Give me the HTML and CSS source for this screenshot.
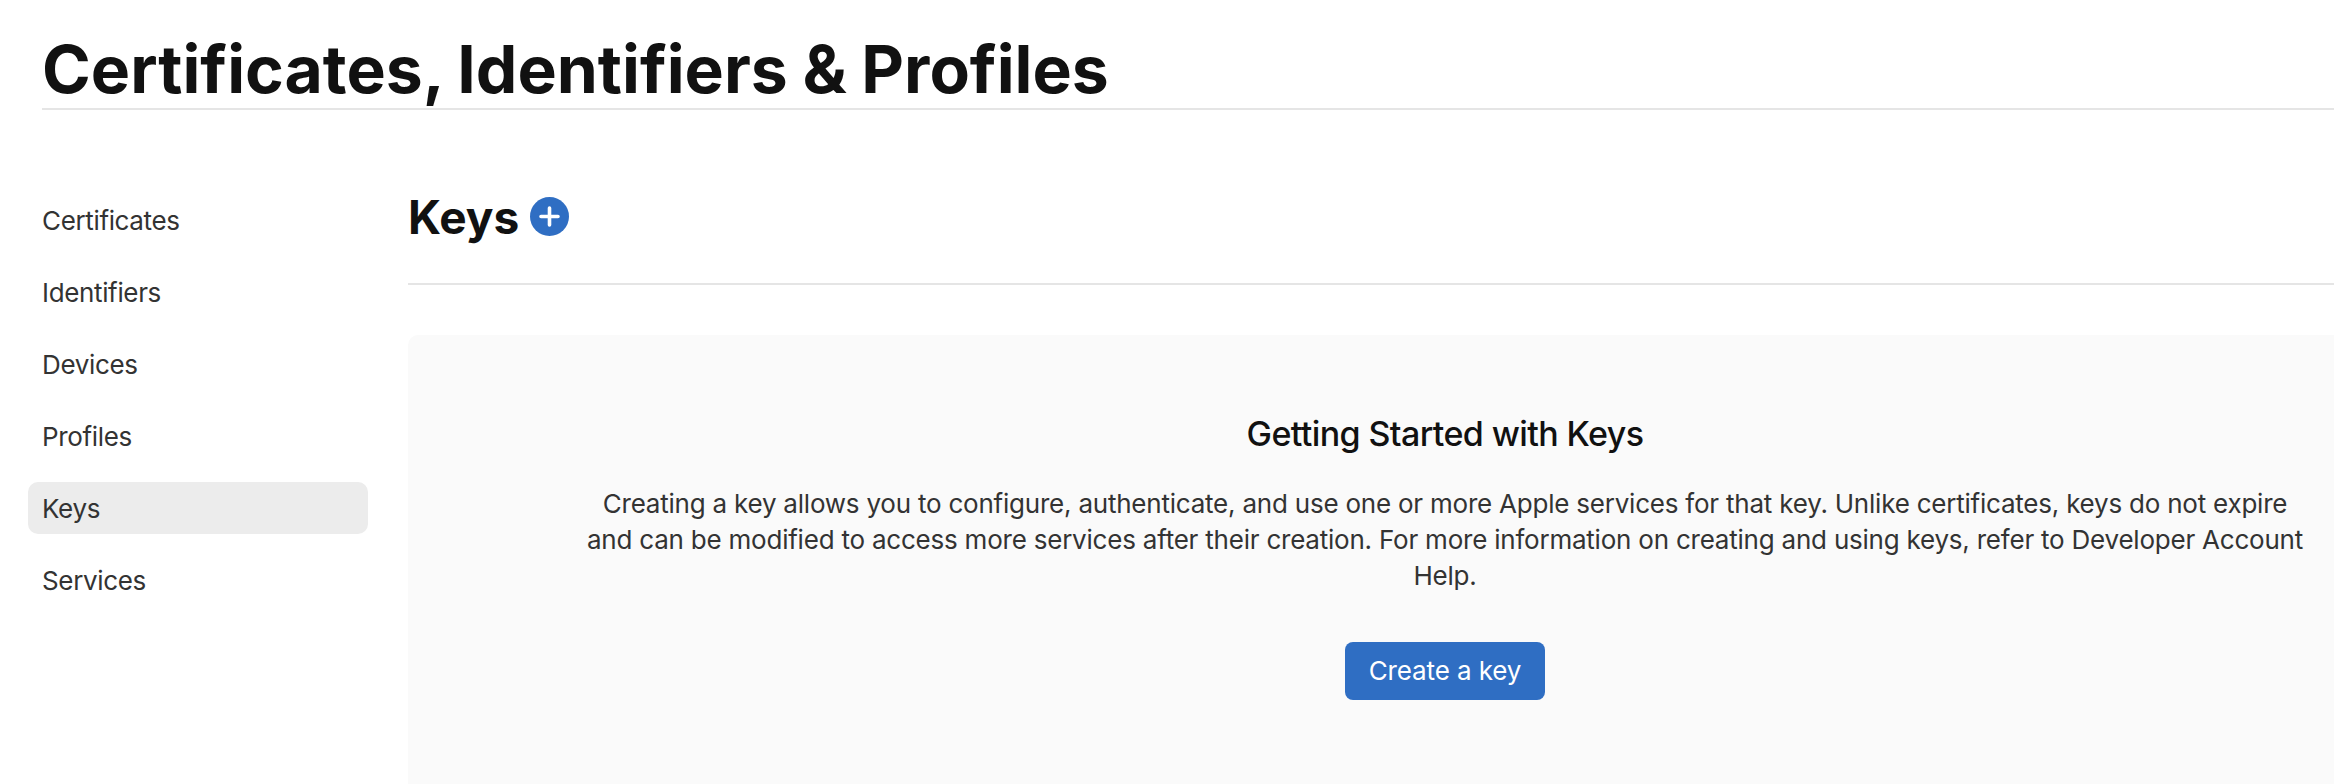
FILE: index.html
```html
<!DOCTYPE html>
<html lang="en">
<head>
    <meta charset="UTF-8">
    <title>Certificates, Identifiers &amp; Profiles</title>
    <link rel="stylesheet" href="styles.css">
</head>
<body>
    <header class="page-header">
        <h1>Certificates, Identifiers &amp; Profiles</h1>
    </header>
    <div class="layout">
        <nav class="sidebar">
            <a class="nav-item">Certificates</a>
            <a class="nav-item">Identifiers</a>
            <a class="nav-item">Devices</a>
            <a class="nav-item">Profiles</a>
            <a class="nav-item active">Keys</a>
            <a class="nav-item">Services</a>
        </nav>
        <main class="content">
            <div class="content-header">
                <h2>Keys</h2>
                <svg class="add-icon" width="39" height="39" viewBox="0 0 39 39">
                    <circle cx="19.5" cy="19.5" r="19.5" fill="#2f6ec3"/>
                    <path d="M19.5 11v17M11 19.5h17" stroke="#fff" stroke-width="3.6" stroke-linecap="round"/>
                </svg>
            </div>
            <section class="empty-card">
                <div class="empty-body">
                    <h3>Getting Started with Keys</h3>
                    <p>Creating a key allows you to configure, authenticate, and use one or more Apple services for that key. Unlike certificates, keys do not expire and can be modified to access more services after their creation. For more information on creating and using keys, refer to Developer Account Help.</p>
                    <button class="primary-btn">Create a key</button>
                </div>
            </section>
        </main>
    </div>
</body>
</html>
```

FILE: styles.css
```css
body {
    font-family: Inter, "Liberation Sans", sans-serif;
    background-color: #fff;
    color: #111;
    margin: 0;
}

.page-header {
    margin-left: 42px;
    height: 110px;
    border-bottom: 2px solid #e5e5e5;
    box-sizing: border-box;
}

h1 {
    margin: 0;
    padding-top: 29px;
    font-size: 66px;
    line-height: 80px;
    font-weight: 700;
    word-spacing: -1px;
}

.layout {
    display: flex;
    padding-top: 72px;
}

.sidebar {
    width: 340px;
    margin-left: 28px;
    margin-right: 40px;
    flex-shrink: 0;
    padding-top: 12px;
}

.nav-item {
    display: block;
    height: 52px;
    line-height: 54px;
    margin-bottom: 20px;
    padding-left: 14px;
    border-radius: 10px;
    font-size: 26px;
    letter-spacing: -0.35px;
    color: #333;
}

.nav-item.active {
    background-color: #ececec;
}

.content {
    flex: 1;
}

.content-header {
    display: flex;
    align-items: center;
    gap: 11px;
    height: 103px;
    border-bottom: 2px solid #e5e5e5;
    box-sizing: border-box;
    padding-bottom: 32px;
}

h2 {
    margin: 0;
    font-size: 46px;
    font-weight: 700;
}

.empty-card {
    margin-top: 50px;
    height: 449px;
    background-color: #fafafa;
    border-radius: 10px 0 0 0;
    padding: 77px 28px 0 176px;
    box-sizing: border-box;
}

.empty-body {
    text-align: center;
}

h3 {
    margin: 0 0 30px;
    font-size: 34px;
    line-height: 44px;
    font-weight: 500;
    letter-spacing: -0.6px;
}

p {
    margin: 0 0 48px;
    font-size: 26px;
    line-height: 36px;
    letter-spacing: -0.22px;
    color: #333;
}

.primary-btn {
    width: 200px;
    height: 58px;
    border: none;
    border-radius: 8px;
    padding: 0 0 2px;
    background-color: #2f6ec3;
    color: #fff;
    font-family: inherit;
    font-size: 26px;
    letter-spacing: -0.1px;
}
```
